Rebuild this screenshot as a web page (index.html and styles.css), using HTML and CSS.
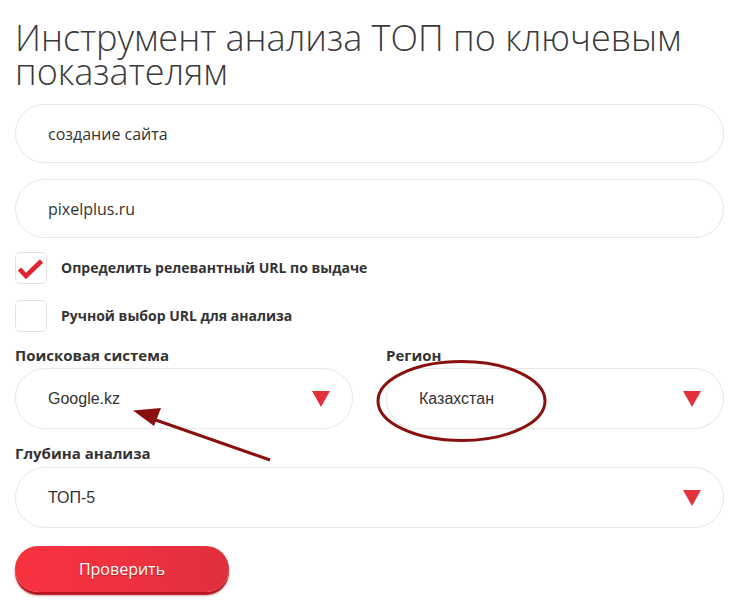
FILE: index.html
```html
<!DOCTYPE html>
<html lang="ru">
<head>
<meta charset="utf-8">
<title>Инструмент анализа ТОП</title>
<link rel="stylesheet" href="styles.css">
</head>
<body>
<div class="page">
  <h1 class="title">Инструмент анализа ТОП по ключевым показателям</h1>
  <div class="field"><span class="field-text os">создание сайта</span></div>
  <div class="field field-second"><span class="field-text os">pixelplus.ru</span></div>

  <div class="checks">
    <div class="check-row">
      <span class="box">
        <svg class="tick" width="32" height="32" viewBox="0 0 32 32"><path d="M4.5 17 L11 24 L26.5 9" fill="none" stroke="#dc2530" stroke-width="4.6" stroke-linejoin="miter" stroke-linecap="butt"/></svg>
      </span>
      <span class="check-label">Определить релевантный URL по выдаче</span>
    </div>
    <div class="check-row">
      <span class="box"></span>
      <span class="check-label">Ручной выбор URL для анализа</span>
    </div>
  </div>

  <div class="two-col">
    <div class="col">
      <div class="label">Поисковая система</div>
      <div class="field select"><span class="field-text ar">Google.kz</span><span class="caret"></span></div>
    </div>
    <div class="col">
      <div class="label">Регион</div>
      <div class="field select"><span class="field-text ar">Казахстан</span><span class="caret"></span></div>
    </div>
  </div>

  <div class="label label-depth">Глубина анализа</div>
  <div class="field select"><span class="field-text ar">ТОП-5</span><span class="caret"></span></div>

  <button class="btn" type="button">Проверить</button>
</div>

<svg class="annot" width="742" height="607" viewBox="0 0 742 607">
  <ellipse cx="461.5" cy="401" rx="83.5" ry="39.5" fill="none" stroke="#8a0f0f" stroke-width="3"/>
  <line x1="270" y1="460" x2="150" y2="418" stroke="#8a0f0f" stroke-width="3"/>
  <polygon points="133,410.5 161,408 154,426" fill="#8a0f0f"/>
</svg>
</body>
</html>
```
FILE: styles.css
```css
html, body {
  margin: 0;
  padding: 0;
  background: #ffffff;
}
body {
  width: 742px;
  height: 607px;
  position: relative;
  overflow: hidden;
  font-family: "Open Sans", "Liberation Sans", sans-serif;
  color: #333333;
}
.page {
  padding: 0 18px 0 15px;
  display: flex;
  flex-direction: column;
}
.title {
  margin: 21px 0 0 0;
  font-family: "Open Sans", sans-serif;
  font-weight: 300;
  font-size: 36px;
  line-height: 34px;
  color: #3a3a3a;
  letter-spacing: 0;
}
.field {
  box-sizing: border-box;
  height: 59px;
  border: 1px solid #e6e6e6;
  border-radius: 30px;
  background: #fff;
  padding: 0 22px 0 32px;
  display: flex;
  align-items: center;
  margin-top: 15px;
}
.field-second {
  margin-top: 16px;
}
.field-text {
  font-size: 16px;
  color: #333;
  flex: 1;
}
.os {
  font-family: "Open Sans", sans-serif;
}
.ar {
  font-family: "Liberation Sans", Arial, sans-serif;
}
.checks {
  margin-top: 14px;
  display: flex;
  flex-direction: column;
  gap: 16px;
}
.check-row {
  display: flex;
  align-items: center;
  gap: 14px;
}
.box {
  box-sizing: border-box;
  width: 32px;
  height: 32px;
  border: 1px solid #e3e3e3;
  border-radius: 5px;
  position: relative;
  flex: none;
}
.tick {
  position: absolute;
  left: -1px;
  top: -1px;
}
.check-label {
  font-weight: 700;
  font-size: 14px;
  line-height: 18px;
  color: #333;
}
.two-col {
  display: grid;
  grid-template-columns: 338px 338px;
  column-gap: 33px;
  margin-top: 13px;
}
.label {
  font-weight: 700;
  font-size: 15px;
  line-height: 20px;
  color: #333;
}
.select {
  height: 61px;
  margin-top: 3px;
}
.label-depth {
  margin-top: 14px;
}
.label-depth + .select {
  margin-top: 4px;
}
.caret {
  width: 0;
  height: 0;
  border-left: 9px solid transparent;
  border-right: 9px solid transparent;
  border-top: 16px solid #e3303d;
  flex: none;
  margin-top: 1px;
}
.btn {
  margin-top: 18px;
  align-self: flex-start;
  width: 214px;
  height: 46px;
  border: none;
  border-radius: 23px;
  background: linear-gradient(90deg, #f8323f 0%, #ef3140 50%, #df2f3d 100%);
  box-shadow: 0 3px 1px #b8161f, 0 4px 3px rgba(120, 0, 0, 0.25);
  color: #fff;
  font-family: "Open Sans", sans-serif;
  font-size: 16px;
  text-shadow: 0 1px 1px rgba(120, 0, 0, 0.45);
  padding: 0;
  cursor: pointer;
}
.annot {
  position: absolute;
  left: 0;
  top: 0;
  pointer-events: none;
}
```
